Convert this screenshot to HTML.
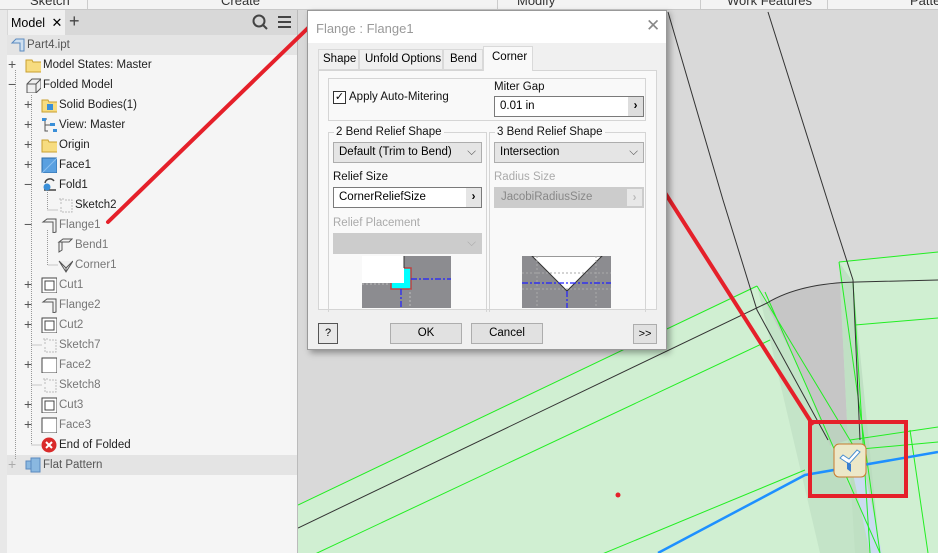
<!DOCTYPE html>
<html><head><meta charset="utf-8"><style>
*{box-sizing:border-box;margin:0;padding:0}
html,body{overflow:hidden}
body{width:938px;height:553px;position:relative;font-family:"Liberation Sans",sans-serif;font-size:11px;background:#d9d9d9}
.abs{position:absolute}
#ribbon{left:0;top:0;width:938px;height:10px;background:#f3f3f3;border-bottom:1px solid #c8c8c8;overflow:hidden}
#ribbon span{position:absolute;top:-7px;font-size:13px;color:#333}
#ribbon i{position:absolute;top:0;width:1px;height:9px;background:#ccc}
#panel{left:0;top:10px;width:298px;height:543px;background:#f5f5f5;border-left:7px solid #e8e8e8;border-right:1px solid #bbb}
#tabs{left:7px;top:10px;width:290px;height:25px;background:#d8d8d8}
.row{position:absolute;height:20px;line-height:20px;font-size:11.5px;color:#222;white-space:nowrap}
.ic{position:absolute;width:16px;height:16px;top:2px}
.pm{position:absolute;font-size:14px;color:#555;top:-1px}
.dis{color:#777}
#dlg{left:307px;top:10px;width:360px;height:340px;background:#f0f0f0;border:1px solid #999;box-shadow:3px 3px 6px rgba(0,0,0,.35);overflow:hidden}
.box{position:absolute;border:1px solid #d5d5d5}
.sel{position:absolute;height:21px;background:#e5e5e5;border:1px solid #adadad;line-height:19px;padding-left:5px;font-size:11.5px;white-space:nowrap}
.inp{position:absolute;height:21px;background:#fff;border:1px solid #7a7a7a;line-height:19px;padding-left:5px;font-size:11.5px;white-space:nowrap}
.btn{position:absolute;background:#e1e1e1;border:1px solid #adadad;text-align:center;font-size:11.5px}
.arr{position:absolute;right:0;top:0;width:15px;height:19px;background:#ddd;font-weight:bold;text-align:center;line-height:18px}
.lbl{position:absolute;font-size:11.5px;color:#111;white-space:nowrap}
.tab{position:absolute;top:0;height:21px;border:1px solid #d9d9d9;background:#f0f0f0;line-height:19px;white-space:nowrap;font-size:11.5px}
</style></head><body>
<div id="ribbon" class="abs">
<span style="left:30px">Sketch</span><i style="left:87px"></i>
<span style="left:221px">Create</span><i style="left:497px"></i>
<span style="left:517px">Modify</span><i style="left:700px"></i>
<span style="left:727px">Work Features</span><i style="left:827px"></i>
<span style="left:910px">Patte</span>
</div>

<svg class="abs" style="left:298px;top:10px" width="640" height="543" viewBox="298 10 640 543">
<rect x="298" y="10" width="640" height="543" fill="#d9d9d9"/>
<path d="M600 383 L767 303 Q800 283 857 282 L938 280 L938 553 L600 553 Z" fill="#c6c6c6"/>
<path d="M757 286 L298 505 L298 553 L938 553 L938 252 L839 262 L848 440 L830 446 L800 370 Z" fill="#d0efd2"/>
<path d="M839 262 L853 282 L880 553 L855 553 L848 440 Z" fill="#bcdcc0" opacity=".8"/>
<path d="M757 286 L800 370 L830 446 L880 553 L820 553 L770 340 Z" fill="#bfe0c3" opacity=".7"/>
<path d="M810 421 L907 421 L907 497 L810 497 Z" fill="#b8d8bc" opacity=".6"/>
<path d="M850 460 L862 460 L882 553 L870 553 Z" fill="#cbdcf0"/>
<g stroke="#22ee22" stroke-width="1" fill="none">
<path d="M757 286 L298 505"/><path d="M770 340 L298 562"/>
<path d="M757 286 L862 460"/><path d="M765 292 L880 553"/>
<path d="M839 262 L938 252"/><path d="M839 262 L880 553"/>
<path d="M853 282 L870 553"/><path d="M855 325 L938 318"/>
<path d="M850 440 L938 427"/><path d="M850 450 L938 442"/>
<path d="M805 470 L298 680"/><path d="M910 430 L928 553"/>
</g>
<g stroke="#333" stroke-width="1" fill="none">
<path d="M668 12 L723 200 L757 310 L828 440"/>
<path d="M768 12 L833 218 L853 280 L860 440"/>
<path d="M298 528 L767 303 Q800 283 857 282 L938 280"/>
</g>
<path d="M658 553 L805 475 L938 452" stroke="#1e90ff" stroke-width="2.5" fill="none"/>
<path d="M660 185 L813 425" stroke="#e5202a" stroke-width="4"/>
<rect x="810" y="422" width="96" height="74" fill="none" stroke="#e5202a" stroke-width="4"/>
<circle cx="618" cy="495" r="2.5" fill="#e5202a"/>
<rect x="834" y="444" width="32" height="33" rx="5" fill="#ece8c8" stroke="#c87a30"/>
<path d="M840 458 L849 464 L860 452 L857 450 L849 459 L843 455 Z" fill="#fff" stroke="#4a8fd0"/>
<path d="M847 462 L851 464 L851 472 L847 469 Z" fill="#3a7fd0"/>
</svg>

<div id="panel" class="abs"></div>
<div id="tabs" class="abs">
<div class="abs" style="left:1px;top:0;width:57px;height:25px;background:#f0f0f0;line-height:25px;padding-left:3px;font-size:12.5px;white-space:nowrap">Model <span style="margin-left:3px;font-size:13px">✕</span></div>
<div class="abs" style="left:62px;top:1px;font-size:18px;color:#444">+</div>
<svg class="abs" style="left:245px;top:4px" width="45" height="18"><circle cx="7" cy="7" r="5.5" stroke="#444" stroke-width="2" fill="none"/><path d="M11 11 L15 15" stroke="#444" stroke-width="2"/><path d="M26 3h13M26 8h13M26 13h13" stroke="#444" stroke-width="2"/></svg>
</div>
<div class="abs" style="left:7px;top:35px;width:290px;height:20px;background:#e4e4e4"></div>
<div class="abs" style="left:7px;top:455px;width:290px;height:20px;background:#e4e4e4"></div>
<svg class="abs" style="left:0;top:0" width="298" height="553">
<g stroke="#999" stroke-dasharray="1,1" fill="none">
<path d="M15.5 70V460M31.5 95V445M31.5 445H42M47.5 190V210H58M47.5 230V265H58M31.5 345H42M31.5 385H42"/>
</g>
</svg>
<div class="row" style="left:10px;top:35px"><svg class="ic" style="left:0" width="16" height="16"><path d="M2 6 L6 2 L14 2 L14 14 L10 14 L10 6 Z" fill="#cfe0f0" stroke="#5a8ac0"/></svg><span style="position:absolute;left:17px;color:#555">Part4.ipt</span></div>
<div class="row" style="left:8px;top:55px"><span class="pm">+</span><svg class="ic" style="left:17px" width="18" height="16"><path d="M1 3h6l1 2h9v10H1z" fill="#f7dc80" stroke="#c9a030"/></svg><span style="position:absolute;left:35px">Model States: Master</span></div>
<div class="row" style="left:8px;top:75px"><span class="pm">−</span><svg class="ic" style="left:17px" width="18" height="16"><path d="M2 7l5-5h9v9l-5 5H2z M2 7h9v9 M11 7l5-5" fill="#eee" stroke="#555"/></svg><span style="position:absolute;left:35px">Folded Model</span></div>
<div class="row" style="left:24px;top:95px"><span class="pm">+</span><svg class="ic" style="left:17px" width="18" height="16"><path d="M1 3h6l1 2h9v10H1z" fill="#f7dc80" stroke="#c9a030"/><rect x="6" y="7" width="6" height="6" fill="#3a8fd8"/></svg><span style="position:absolute;left:35px">Solid Bodies(1)</span></div>
<div class="row" style="left:24px;top:115px"><span class="pm">+</span><svg class="ic" style="left:17px" width="18" height="16"><path d="M2 2h4M4 2v12h3M4 8h6" stroke="#555" fill="none"/><rect x="1" y="1" width="4" height="3" fill="#3a8fd8"/><rect x="9" y="6" width="5" height="3" fill="#3a8fd8"/><rect x="12" y="12" width="5" height="3" fill="#3a8fd8"/></svg><span style="position:absolute;left:35px">View: Master</span></div>
<div class="row" style="left:24px;top:135px"><span class="pm">+</span><svg class="ic" style="left:17px" width="18" height="16"><path d="M1 3h6l1 2h9v10H1z" fill="#f7dc80" stroke="#c9a030"/></svg><span style="position:absolute;left:35px">Origin</span></div>
<div class="row" style="left:24px;top:155px"><span class="pm">+</span><svg class="ic" style="left:17px" width="18" height="16"><rect x="1" y="1" width="15" height="15" fill="#5aa0e0" stroke="#2a6aa8"/><path d="M1 16L16 1" stroke="#8cc0f0"/></svg><span style="position:absolute;left:35px">Face1</span></div>
<div class="row" style="left:24px;top:175px"><span class="pm">−</span><svg class="ic" style="left:17px" width="18" height="16"><path d="M4 6a5 5 0 0 1 9-2 M3 13h12" stroke="#444" fill="none" stroke-width="1.5"/><circle cx="6" cy="10" r="3.5" fill="#3a8fd8"/></svg><span style="position:absolute;left:35px">Fold1</span></div>
<div class="row" style="left:40px;top:195px"><svg class="ic" style="left:17px" width="18" height="16"><path d="M2 2h5M4 2v5M8 3h7v12H4v-6" stroke="#bbb" stroke-dasharray="2,1" fill="none"/></svg><span style="position:absolute;left:35px">Sketch2</span></div>
<div class="row" style="left:24px;top:215px"><span class="pm">−</span><svg class="ic" style="left:17px" width="18" height="16"><path d="M2 5l4-3h9v13l-3 1V5H2z" fill="#f3f3f3" stroke="#555"/></svg><span style="position:absolute;left:35px" class="dis">Flange1</span></div>
<div class="row" style="left:40px;top:235px"><svg class="ic" style="left:17px" width="18" height="16"><path d="M2 5l4-3h9l-3 3H2z M2 5v10l3-2V5" fill="#f3f3f3" stroke="#555"/></svg><span style="position:absolute;left:35px" class="dis">Bend1</span></div>
<div class="row" style="left:40px;top:255px"><svg class="ic" style="left:17px" width="18" height="16"><path d="M2 4l7 7 7-7M9 11v4M2 4l7 11 7-11" fill="#eee" stroke="#555"/></svg><span style="position:absolute;left:35px" class="dis">Corner1</span></div>
<div class="row" style="left:24px;top:275px"><span class="pm">+</span><svg class="ic" style="left:17px" width="18" height="16"><rect x="1" y="1" width="15" height="15" fill="#fff" stroke="#444"/><rect x="4" y="4" width="9" height="9" fill="none" stroke="#444"/></svg><span style="position:absolute;left:35px" class="dis">Cut1</span></div>
<div class="row" style="left:24px;top:295px"><span class="pm">+</span><svg class="ic" style="left:17px" width="18" height="16"><path d="M2 5l4-3h9v13l-3 1V5H2z" fill="#f3f3f3" stroke="#555"/></svg><span style="position:absolute;left:35px" class="dis">Flange2</span></div>
<div class="row" style="left:24px;top:315px"><span class="pm">+</span><svg class="ic" style="left:17px" width="18" height="16"><rect x="1" y="1" width="15" height="15" fill="#fff" stroke="#444"/><rect x="4" y="4" width="9" height="9" fill="none" stroke="#444"/></svg><span style="position:absolute;left:35px" class="dis">Cut2</span></div>
<div class="row" style="left:40px;top:335px"><svg class="ic" style="left:1px" width="18" height="16"><path d="M2 2h5M4 2v5M8 3h7v12H4v-6" stroke="#bbb" stroke-dasharray="2,1" fill="none"/></svg><span style="position:absolute;left:19px" class="dis">Sketch7</span></div>
<div class="row" style="left:24px;top:355px"><span class="pm">+</span><svg class="ic" style="left:17px" width="18" height="16"><rect x="1" y="1" width="15" height="15" fill="#fff" stroke="#444"/></svg><span style="position:absolute;left:35px" class="dis">Face2</span></div>
<div class="row" style="left:40px;top:375px"><svg class="ic" style="left:1px" width="18" height="16"><path d="M2 2h5M4 2v5M8 3h7v12H4v-6" stroke="#bbb" stroke-dasharray="2,1" fill="none"/></svg><span style="position:absolute;left:19px" class="dis">Sketch8</span></div>
<div class="row" style="left:24px;top:395px"><span class="pm">+</span><svg class="ic" style="left:17px" width="18" height="16"><rect x="1" y="1" width="15" height="15" fill="#fff" stroke="#444"/><rect x="4" y="4" width="9" height="9" fill="none" stroke="#444"/></svg><span style="position:absolute;left:35px" class="dis">Cut3</span></div>
<div class="row" style="left:24px;top:415px"><span class="pm">+</span><svg class="ic" style="left:17px" width="18" height="16"><rect x="1" y="1" width="15" height="15" fill="#fff" stroke="#444"/></svg><span style="position:absolute;left:35px" class="dis">Face3</span></div>
<div class="row" style="left:24px;top:435px"><svg class="ic" style="left:17px" width="18" height="16"><circle cx="8" cy="8" r="7.5" fill="#d92a2a"/><path d="M5 5l6 6M11 5l-6 6" stroke="#fff" stroke-width="2"/></svg><span style="position:absolute;left:35px">End of Folded</span></div>
<div class="row" style="left:8px;top:455px"><span class="pm" style="color:#aaa">+</span><svg class="ic" style="left:17px" width="18" height="16"><rect x="1" y="4" width="8" height="8" fill="#8ab8e0" stroke="#5a8ac0"/><rect x="6" y="1" width="9" height="14" fill="#8ab8e0" stroke="#5a8ac0"/></svg><span style="position:absolute;left:35px;color:#555">Flat Pattern</span></div>

<svg class="abs" style="left:0;top:0" width="310" height="230"><path d="M108 222 L308 28" stroke="#e5202a" stroke-width="4" stroke-linecap="round"/></svg>

<div id="dlg" class="abs">
<div class="abs" style="left:0;top:0;width:358px;height:32px;background:#fff"></div>
<div class="lbl" style="left:8px;top:10px;color:#999;font-size:13px">Flange : Flange1</div>
<div class="abs" style="left:338px;top:5px;font-size:17px;color:#888">✕</div>
<div class="abs" style="left:10px;top:38px;width:339px;height:21px;">
<div class="tab" style="left:0;width:41px;padding-left:4px">Shape</div>
<div class="tab" style="left:41px;width:84px;padding-left:5px">Unfold Options</div>
<div class="tab" style="left:125px;width:40px;padding-left:6px">Bend</div>
<div class="tab" style="left:165px;top:-3px;width:50px;height:25px;border-bottom:none;background:#f9f9f9;line-height:21px;padding-left:8px;z-index:2">Corner</div>
</div>
<div class="box" style="left:10px;top:59px;width:339px;height:240px;background:#f9f9f9"></div>
<div class="box" style="left:20px;top:67px;width:318px;height:43px"></div>
<div class="abs" style="left:25px;top:80px;width:13px;height:13px;border:1px solid #333;background:#fff;font-size:11px;line-height:11px;text-align:center">✓</div>
<div class="lbl" style="left:41px;top:80px">Apply Auto-Mitering</div>
<div class="lbl" style="left:186px;top:70px">Miter Gap</div>
<div class="inp" style="left:186px;top:85px;width:150px">0.01 in<div class="arr">›</div></div>
<div class="box" style="left:20px;top:121px;width:159px;height:180px;border-bottom:none"></div>
<div class="box" style="left:181px;top:121px;width:157px;height:180px;border-bottom:none"></div>
<div class="lbl" style="left:26px;top:115px;background:#f9f9f9;padding:0 2px">2 Bend Relief Shape</div>
<div class="lbl" style="left:187px;top:115px;background:#f9f9f9;padding:0 2px">3 Bend Relief Shape</div>
<div class="sel" style="left:25px;top:131px;width:149px">Default (Trim to Bend)<span style="position:absolute;right:5px;color:#555">⌵</span></div>
<div class="sel" style="left:186px;top:131px;width:150px">Intersection<span style="position:absolute;right:5px;color:#555">⌵</span></div>
<div class="lbl" style="left:25px;top:160px">Relief Size</div>
<div class="inp" style="left:25px;top:176px;width:149px">CornerReliefSize<div class="arr" style="background:#e5e5e5">›</div></div>
<div class="lbl" style="left:186px;top:160px;color:#aaa">Radius Size</div>
<div class="inp" style="left:186px;top:176px;width:150px;border-color:#ccc;background:#ccc;color:#888;border-width:2px;line-height:17px">JacobiRadiusSize<div class="arr" style="background:#e8e8e8;color:#bbb;height:17px">›</div></div>
<div class="lbl" style="left:25px;top:206px;color:#aaa">Relief Placement</div>
<div class="sel" style="left:25px;top:222px;width:149px;background:#ccc;border-color:#ccc"><span style="position:absolute;right:5px;color:#aaa">⌵</span></div>
<svg class="abs" style="left:54px;top:245px" width="89" height="52"><rect width="89" height="52" fill="#8c8c90"/><rect x="0" y="0" width="42" height="27" fill="#fff"/><path d="M28 28h20M48 28v24M0 28H28" stroke="#bbb" stroke-dasharray="2,2"/><rect x="29" y="12" width="20" height="21" fill="#00ffff" stroke="#c04040" stroke-width="1.5"/><rect x="28" y="0" width="14" height="27" fill="#fff"/><path d="M42 0v12" stroke="#333"/><path d="M49 23h40M39 33v19" stroke="#2020ff" stroke-dasharray="6,2,2,2" stroke-width="1.2"/></svg>
<svg class="abs" style="left:214px;top:245px" width="89" height="52"><rect width="89" height="52" fill="#8c8c90"/><path d="M10 0 L45 35 L80 0Z" fill="#fff" stroke="#333"/><path d="M0 17h89M0 33h89M15 0v52M74 0v52" stroke="#aaa" stroke-dasharray="2,2"/><path d="M0 27h89M45 35v17" stroke="#2020ff" stroke-dasharray="6,2,2,2" stroke-width="1.2"/></svg>
<div class="btn" style="left:10px;top:312px;width:20px;height:21px;background:#e8e8e8;border-color:#555;font-size:11px;line-height:19px">?</div>
<div class="btn" style="left:82px;top:312px;width:72px;height:21px;line-height:19px">OK</div>
<div class="btn" style="left:163px;top:312px;width:72px;height:21px;line-height:19px">Cancel</div>
<div class="btn" style="left:325px;top:313px;width:24px;height:20px;line-height:18px;font-size:11px">&gt;&gt;</div>
</div>
</body></html>
